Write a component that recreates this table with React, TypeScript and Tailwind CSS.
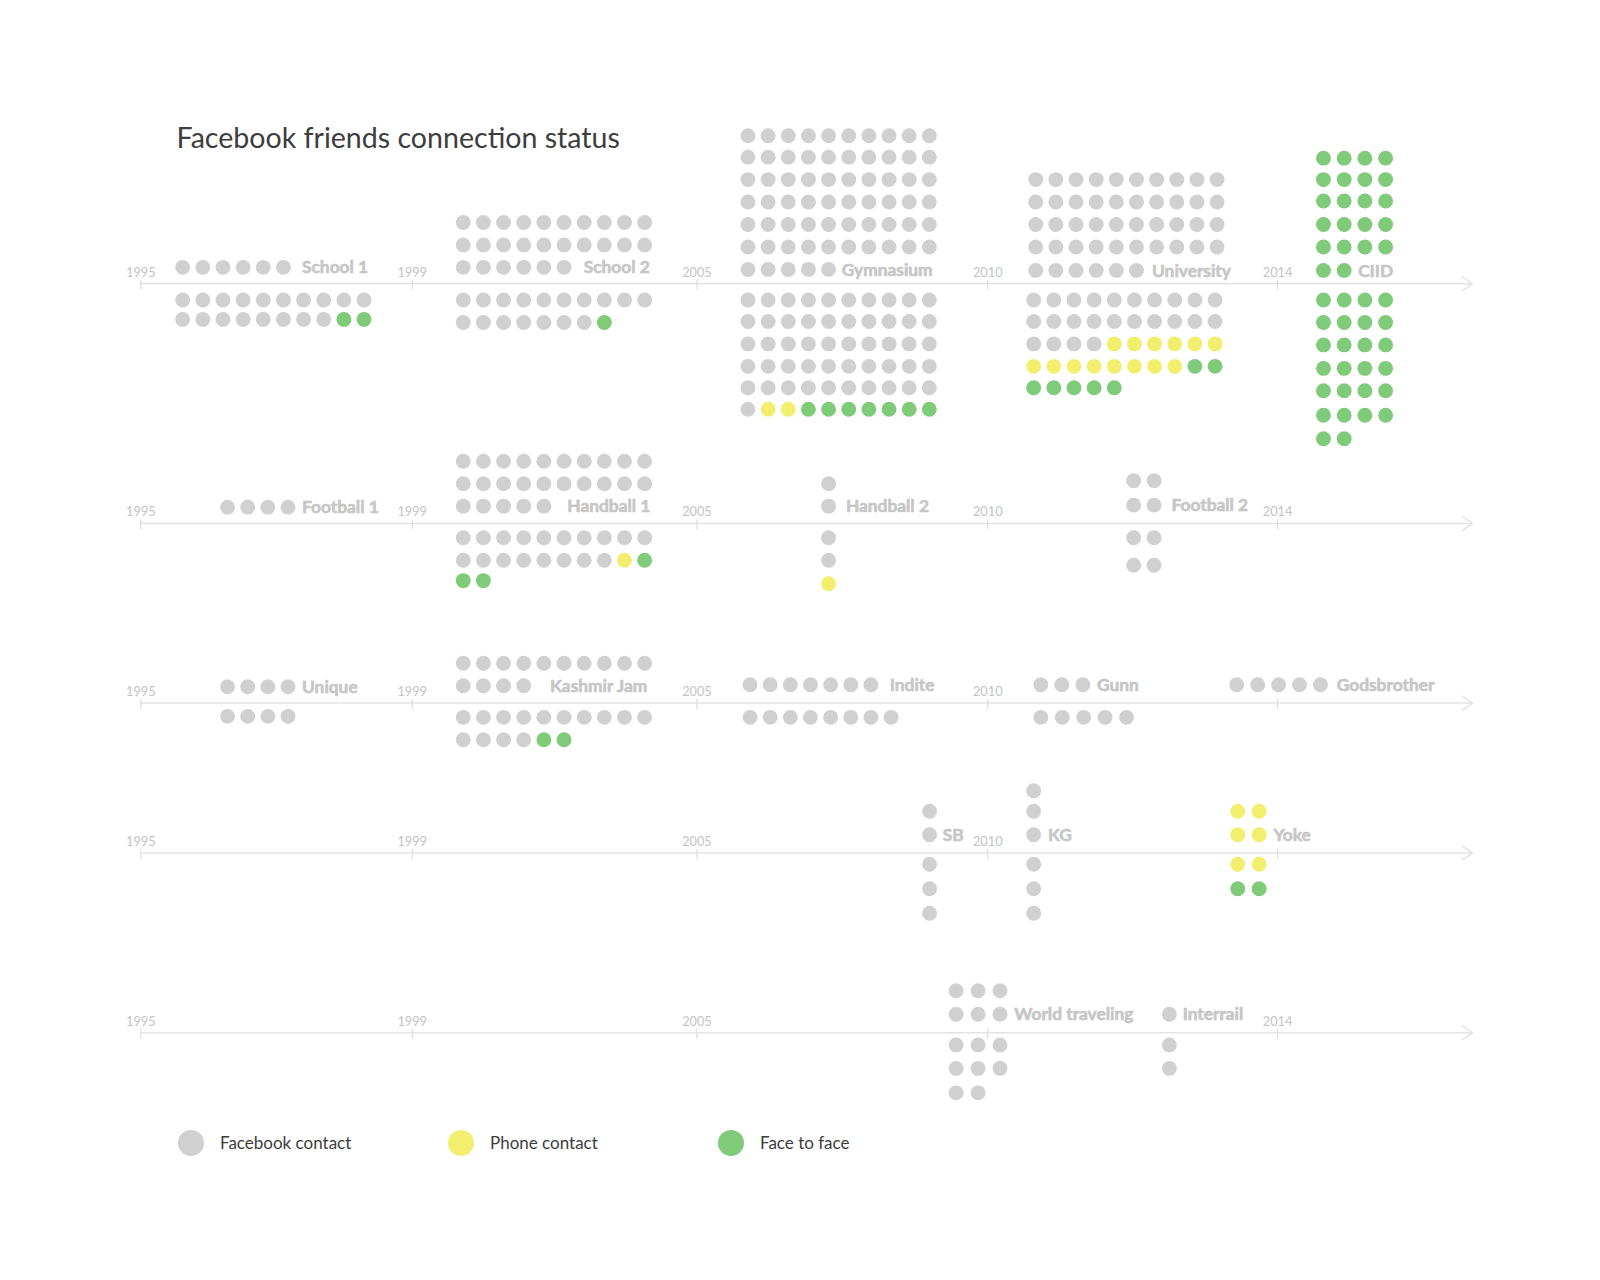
type Row = [number, number, string, number?];
type Group = { label: string; lx: number; ly: number; rows: Row[] };

const COLORS: Record<string, string> = {
  a: "#d0d0d0",
  y: "#f2ef6e",
  g: "#7fcb79",
};

const a = (n: number) => "a".repeat(n);
const g = (n: number) => "g".repeat(n);

// coordinates are in the chart's own units (viewBox), dots placed per row
const groups: Group[] = [
  // row 1
  {
    label: "School 1",
    lx: 296,
    ly: 262,
    rows: [
      [262, 179, a(6)],
      [294, 179, a(10)],
      [313, 179, "aaaaaaaagg"],
    ],
  },
  {
    label: "School 2",
    lx: 572,
    ly: 262,
    rows: [
      [218, 454, a(10)],
      [240, 454, a(10)],
      [262, 454, a(6)],
      [294, 454, a(10)],
      [316, 454, "aaaaaaag"],
    ],
  },
  {
    label: "Gymnasium",
    lx: 825,
    ly: 264,
    rows: [
      [133, 733, a(10)],
      [154, 733, a(10)],
      [176, 733, a(10)],
      [198, 733, a(10)],
      [220, 733, a(10)],
      [242, 733, a(10)],
      [264, 733, a(5)],
      [294, 733, a(10)],
      [315, 733, a(10)],
      [337, 733, a(10)],
      [359, 733, a(10)],
      [380, 733, a(10)],
      [401, 733, "ayyggggggg"],
    ],
  },
  {
    label: "University",
    lx: 1129,
    ly: 265,
    rows: [
      [176, 1015, a(10)],
      [198, 1015, a(10)],
      [220, 1015, a(10)],
      [242, 1015, a(10)],
      [265, 1015, a(6)],
      [294, 1013, a(10)],
      [315, 1013, a(10)],
      [337, 1013, "aaaayyyyyy"],
      [359, 1013, "yyyyyyyygg"],
      [380, 1013, g(5)],
    ],
  },
  {
    label: "CIID",
    lx: 1331,
    ly: 265,
    rows: [
      [155, 1297, g(4), 20.3],
      [176, 1297, g(4), 20.3],
      [197, 1297, g(4), 20.3],
      [220, 1297, g(4), 20.3],
      [242, 1297, g(4), 20.3],
      [265, 1297, g(2), 20.3],
      [294, 1297, g(4), 20.3],
      [316, 1297, g(4), 20.3],
      [338, 1297, g(4), 20.3],
      [361, 1297, g(4), 20.3],
      [383, 1297, g(4), 20.3],
      [407, 1297, g(4), 20.3],
      [430, 1297, g(2), 20.3],
    ],
  },
  // row 2
  { label: "Football 1", lx: 296, ly: 497, rows: [[497, 223, a(4)]] },
  {
    label: "Handball 1",
    lx: 556,
    ly: 496,
    rows: [
      [452, 454, a(10)],
      [474, 454, a(10)],
      [496, 454, a(5)],
      [527, 454, a(10)],
      [549, 454, "aaaaaaaayg"],
      [569, 454, g(2)],
    ],
  },
  {
    label: "Handball 2",
    lx: 829,
    ly: 496,
    rows: [
      [474, 812, "a"],
      [496, 812, "a"],
      [527, 812, "a"],
      [549, 812, "a"],
      [572, 812, "y"],
    ],
  },
  {
    label: "Football 2",
    lx: 1148,
    ly: 495,
    rows: [
      [471, 1111, a(2), 20],
      [495, 1111, a(2), 20],
      [527, 1111, a(2), 20],
      [554, 1111, a(2), 20],
    ],
  },
  // row 3
  {
    label: "Unique",
    lx: 296,
    ly: 673,
    rows: [
      [673, 223, a(4)],
      [702, 223, a(4)],
    ],
  },
  {
    label: "Kashmir Jam",
    lx: 539,
    ly: 672,
    rows: [
      [650, 454, a(10)],
      [672, 454, a(4)],
      [703, 454, a(10)],
      [725, 454, "aaaagg"],
    ],
  },
  {
    label: "Indite",
    lx: 872,
    ly: 671,
    rows: [
      [671, 735, a(7)],
      [703, 735, a(8)],
    ],
  },
  {
    label: "Gunn",
    lx: 1075,
    ly: 671,
    rows: [
      [671, 1020, a(3), 20.6],
      [703, 1020, a(5), 21],
    ],
  },
  { label: "Godsbrother", lx: 1310, ly: 671, rows: [[671, 1212, a(5), 20.5]] },
  // row 4
  {
    label: "SB",
    lx: 924,
    ly: 818,
    rows: [
      [795, 911, "a"],
      [818, 911, "a"],
      [847, 911, "a"],
      [871, 911, "a"],
      [895, 911, "a"],
    ],
  },
  {
    label: "KG",
    lx: 1027,
    ly: 818,
    rows: [
      [775, 1013, "a"],
      [795, 1013, "a"],
      [818, 1013, "a"],
      [847, 1013, "a"],
      [871, 1013, "a"],
      [895, 1013, "a"],
    ],
  },
  {
    label: "Yoke",
    lx: 1248,
    ly: 818,
    rows: [
      [795, 1213, "yy", 21],
      [818, 1213, "yy", 21],
      [847, 1213, "yy", 21],
      [871, 1213, "gg", 21],
    ],
  },
  // row 5
  {
    label: "World traveling",
    lx: 994,
    ly: 994,
    rows: [
      [971, 937, a(3), 21.5],
      [994, 937, a(3), 21.5],
      [1024, 937, a(3), 21.5],
      [1047, 937, a(3), 21.5],
      [1071, 937, a(2), 21.5],
    ],
  },
  {
    label: "Interrail",
    lx: 1159,
    ly: 994,
    rows: [
      [994, 1146, "a"],
      [1024, 1146, "a"],
      [1047, 1146, "a"],
    ],
  },
];

// axis y, plus years whose label is covered by dots on that line
const axes: { y: number; hide: string[] }[] = [
  { y: 278, hide: [] },
  { y: 513, hide: [] },
  { y: 689, hide: ["2014"] },
  { y: 836, hide: ["2014"] },
  { y: 1012, hide: ["2010"] },
];

const ticks: [number, string][] = [
  [138, "1995"],
  [404, "1999"],
  [683, "2005"],
  [968, "2010"],
  [1252, "2014"],
];

const FONT = "Lato, 'Open Sans', sans-serif";

function Axis({ y, hide }: { y: number; hide: string[] }) {
  return (
    <g>
      <line x1={138} y1={y} x2={1443} y2={y} stroke="#e3e3e3" strokeWidth={1.5} />
      <polyline
        points={`1433,${y - 7} 1443,${y} 1433,${y + 7}`}
        fill="none"
        stroke="#e3e3e3"
        strokeWidth={1.5}
      />
      {ticks.map(([x, yr]) => (
        <g key={yr}>
          <line x1={x} y1={y - 4} x2={x} y2={y + 6} stroke="#dedede" strokeWidth={1.2} />
          {!hide.includes(yr) && (
            <text
              x={x}
              y={y - 7}
              textAnchor="middle"
              fontSize={12.5}
              fill="#c4c4c4"
              fontFamily={FONT}
            >
              {yr}
            </text>
          )}
        </g>
      ))}
    </g>
  );
}

function Dots({ group }: { group: Group }) {
  return (
    <g>
      {group.rows.map(([y, x0, pattern, dx = 19.75], ri) =>
        pattern
          .split("")
          .map((c, i) => (
            <circle key={`${ri}-${i}`} cx={x0 + i * dx} cy={y} r={7.3} fill={COLORS[c]} />
          ))
      )}
      <text
        x={group.lx}
        y={group.ly + 6}
        fontSize={17}
        fontWeight={700}
        fill="#c6c6c6"
        stroke="#c6c6c6"
        strokeWidth={0.6}
        fontFamily={FONT}
      >
        {group.label}
      </text>
    </g>
  );
}

const legend = [
  { label: "Facebook contact", color: "bg-[#d0d0d0]" },
  { label: "Phone contact", color: "bg-[#f2ef6e]" },
  { label: "Face to face", color: "bg-[#7fcb79]" },
];

export default function App() {
  return (
    <div className="w-[1600px] h-[1280px] bg-white font-['Lato','Open_Sans',sans-serif]">
      <svg viewBox="0 0 1568 1089.76" className="block w-[1600px] h-[1112px]">
        <text x={173} y={145} fontSize={28} fill="#3d3d3d" fontFamily={FONT}>
          Facebook friends connection status
        </text>
        {axes.map((ax) => (
          <Axis key={ax.y} y={ax.y} hide={ax.hide} />
        ))}
        {groups.map((gr) => (
          <Dots key={gr.label} group={gr} />
        ))}
      </svg>

      <div className="mt-[18px] flex pl-[178px]">
        {legend.map((item) => (
          <div key={item.label} className="flex w-[270px] items-center gap-4">
            <span className={`h-[26px] w-[26px] rounded-full ${item.color}`} />
            <span className="text-[17px] text-[#3d3d3d]">{item.label}</span>
          </div>
        ))}
      </div>
    </div>
  );
}
